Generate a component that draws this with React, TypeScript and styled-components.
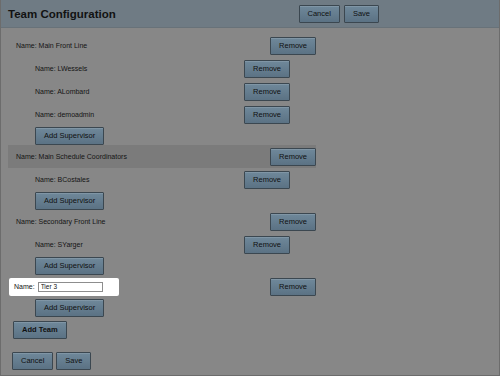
import React from "react";
import styled, { createGlobalStyle } from "styled-components";

const GlobalStyle = createGlobalStyle`
  html, body {
    margin: 0;
    padding: 0;
    background: #878787;
    font-family: "Liberation Sans", Arial, sans-serif;
  }
`;

const Frame = styled.div`
  width: 500px;
  height: 376px;
  box-sizing: border-box;
  border: 1px solid #6c6c6c;
  border-top: none;
  background: #878787;
  overflow: hidden;
`;

const Header = styled.header`
  display: flex;
  align-items: center;
  height: 27px;
  padding: 0 120px 0 7px;
  background: #6f7b84;
  border-bottom: 1px solid #687279;
`;

const Title = styled.h1`
  margin: 0;
  font-size: 11.5px;
  font-weight: bold;
  color: #121212;
`;

const HeaderActions = styled.div`
  display: flex;
  gap: 4px;
  margin-left: auto;
`;

const Button = styled.button<{ $bold?: boolean }>`
  height: 18px;
  padding: 0 8px;
  border: 1px solid #3b4750;
  border-radius: 1px;
  background: linear-gradient(#6f889a, #5b7284);
  color: #101010;
  font-family: inherit;
  font-size: 7.5px;
  font-weight: ${({ $bold }) => ($bold ? "bold" : "normal")};
  box-shadow: inset 0 1px 0 rgba(255, 255, 255, 0.12);
  cursor: pointer;
`;

const Body = styled.main`
  padding: 6px 0 0 7px;
`;

const TeamList = styled.div`
  width: 308px;
`;

const TeamRow = styled.div<{ $shaded?: boolean }>`
  display: flex;
  align-items: center;
  justify-content: space-between;
  height: 23px;
  padding-left: 8px;
  background: ${({ $shaded }) => ($shaded ? "#7b7b7b" : "transparent")};
`;

const SubRow = styled.div`
  display: flex;
  align-items: center;
  justify-content: space-between;
  height: 23px;
  margin: 0 26px 0 27px;
`;

const AddRow = styled.div`
  display: flex;
  align-items: center;
  height: 19px;
  padding-left: 27px;
`;

const Label = styled.span`
  font-size: 7px;
  color: #141414;
`;

const Highlight = styled.div`
  display: flex;
  align-items: center;
  gap: 3px;
  width: 110px;
  height: 18px;
  box-sizing: border-box;
  margin-left: -7px;
  padding-left: 5px;
  background: #ffffff;
  border-radius: 2px;
`;

const NameInput = styled.input`
  width: 65px;
  height: 10px;
  box-sizing: border-box;
  padding: 0 2px;
  border: 1px solid #8d8d8d;
  font-family: inherit;
  font-size: 6.5px;
  color: #111;
  outline: none;
`;

const AddTeamRow = styled.div`
  padding: 1px 0 0 5px;
`;

const Footer = styled.div`
  display: flex;
  gap: 3px;
  padding: 13px 0 0 4px;
`;

type Team = { name: string; supervisors: string[]; shaded?: boolean; editing?: boolean };

const teams: Team[] = [
  { name: "Main Front Line", supervisors: ["LWessels", "ALombard", "demoadmin"] },
  { name: "Main Schedule Coordinators", supervisors: ["BCostales"], shaded: true },
  { name: "Secondary Front Line", supervisors: ["SYarger"] },
  { name: "Tier 3", supervisors: [], editing: true },
];

const TeamBlock: React.FC<{ team: Team }> = ({ team }) => (
  <>
    <TeamRow $shaded={team.shaded}>
      {team.editing ? (
        <Highlight>
          <Label>Name:</Label>
          <NameInput defaultValue={team.name} />
        </Highlight>
      ) : (
        <Label>Name: {team.name}</Label>
      )}
      <Button>Remove</Button>
    </TeamRow>
    {team.supervisors.map((s) => (
      <SubRow key={s}>
        <Label>Name: {s}</Label>
        <Button>Remove</Button>
      </SubRow>
    ))}
    <AddRow>
      <Button>Add Supervisor</Button>
    </AddRow>
  </>
);

export default function App() {
  return (
    <>
      <GlobalStyle />
      <Frame>
        <Header>
          <Title>Team Configuration</Title>
          <HeaderActions>
            <Button>Cancel</Button>
            <Button>Save</Button>
          </HeaderActions>
        </Header>
        <Body>
          <TeamList>
            {teams.map((t) => (
              <TeamBlock key={t.name} team={t} />
            ))}
          </TeamList>
          <AddTeamRow>
            <Button $bold>Add Team</Button>
          </AddTeamRow>
          <Footer>
            <Button>Cancel</Button>
            <Button>Save</Button>
          </Footer>
        </Body>
      </Frame>
    </>
  );
}
